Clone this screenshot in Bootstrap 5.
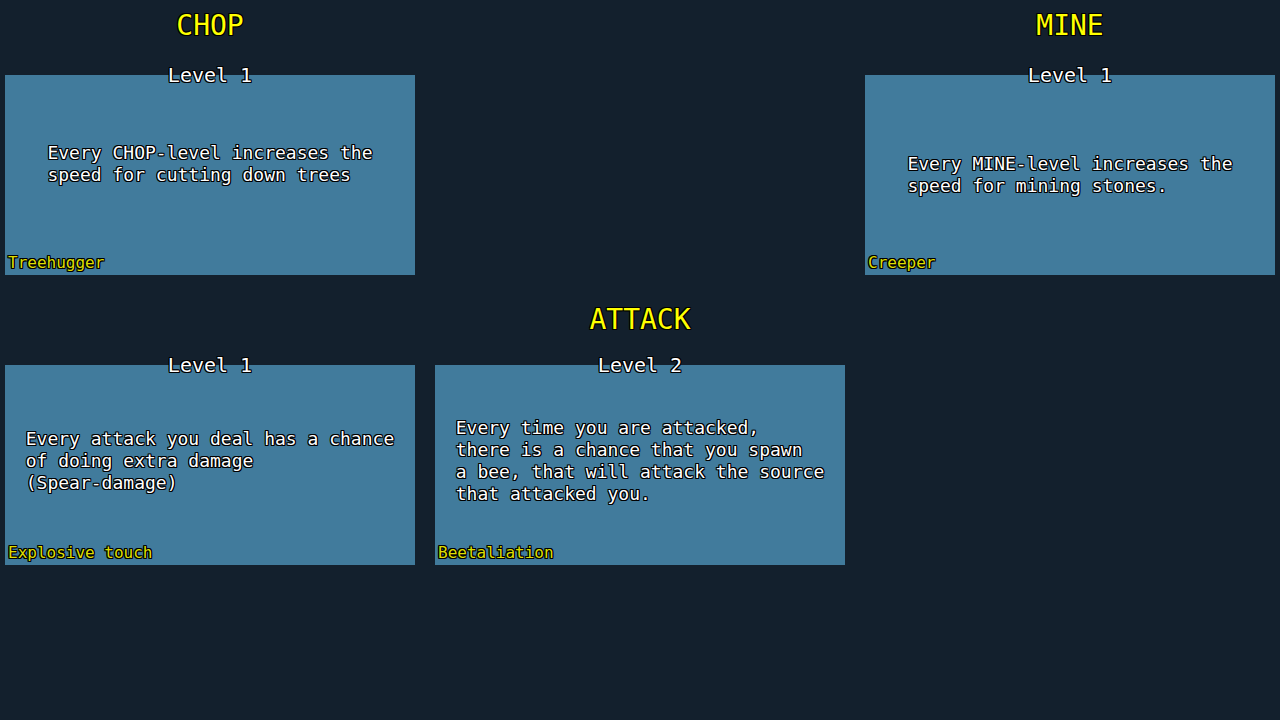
<!DOCTYPE html>
<html lang="en">
<head>
<meta charset="utf-8">
<meta name="viewport" content="width=device-width, initial-scale=1">
<title>Skills</title>
<link href="https://cdn.jsdelivr.net/npm/bootstrap@5.3.0/dist/css/bootstrap.min.css" rel="stylesheet">
<style>
body { background: #13202d; color: #fff; font-family: "DejaVu Sans Mono", monospace; }
.skill-board { padding: 0 5px; display: grid; grid-template-columns: repeat(3, minmax(0, 1fr)); gap: 15px 20px; }
.outlined { text-shadow: -1px -1px 0 #000, 0 -1px 0 #000, 1px -1px 0 #000, -1px 0 0 #000, 1px 0 0 #000, -1px 1px 0 #000, 0 1px 0 #000, 1px 1px 0 #000; }
.skill-title { height: 75px; padding-top: 2px; margin: 0; font-size: 28px; line-height: 48px; font-weight: 400; color: #ff0; }
.skill-title.lowered { padding-top: 6px; }
.perk { background: #417b9c; min-height: 200px; }
.perk-level { font-size: 20px; line-height: 30px; font-weight: 400; }
.perk-text { font-size: 18px; line-height: 22px; white-space: nowrap; }
.perk-text.raised { padding-bottom: 22px; }
.perk-name { font-size: 16px; line-height: 24px; color: #dede00; padding-left: 3px; }
</style>
</head>
<body>
<main class="skill-board outlined">
  <section>
    <h2 class="skill-title text-center">CHOP</h2>
    <article class="perk position-relative d-flex flex-column">
      <h3 class="perk-level position-absolute top-0 start-50 translate-middle m-0 text-nowrap">Level 1</h3>
      <div class="flex-grow-1 d-flex align-items-center justify-content-center pt-4"><p class="perk-text raised m-0">Every CHOP-level increases the<br>speed for cutting down trees</p></div>
      <div class="perk-name">Treehugger</div>
    </article>
  </section>
  <div></div>
  <section>
    <h2 class="skill-title text-center">MINE</h2>
    <article class="perk position-relative d-flex flex-column">
      <h3 class="perk-level position-absolute top-0 start-50 translate-middle m-0 text-nowrap">Level 1</h3>
      <div class="flex-grow-1 d-flex align-items-center justify-content-center pt-4"><p class="perk-text m-0">Every MINE-level increases the<br>speed for mining stones.</p></div>
      <div class="perk-name">Creeper</div>
    </article>
  </section>
  <section class="d-flex flex-column justify-content-end">
    <article class="perk position-relative d-flex flex-column">
      <h3 class="perk-level position-absolute top-0 start-50 translate-middle m-0 text-nowrap">Level 1</h3>
      <div class="flex-grow-1 d-flex align-items-center justify-content-center pt-3"><p class="perk-text m-0">Every attack you deal has a chance<br>of doing extra damage<br>(Spear-damage)</p></div>
      <div class="perk-name">Explosive touch</div>
    </article>
  </section>
  <section>
    <h2 class="skill-title lowered text-center">ATTACK</h2>
    <article class="perk position-relative d-flex flex-column">
      <h3 class="perk-level position-absolute top-0 start-50 translate-middle m-0 text-nowrap">Level 2</h3>
      <div class="flex-grow-1 d-flex align-items-center justify-content-center pt-3"><p class="perk-text m-0">Every time you are attacked,<br>there is a chance that you spawn<br>a bee, that will attack the source<br>that attacked you.</p></div>
      <div class="perk-name">Beetaliation</div>
    </article>
  </section>
</main>
<script src="https://cdn.jsdelivr.net/npm/bootstrap@5.3.0/dist/js/bootstrap.bundle.min.js"></script>
</body>
</html>
